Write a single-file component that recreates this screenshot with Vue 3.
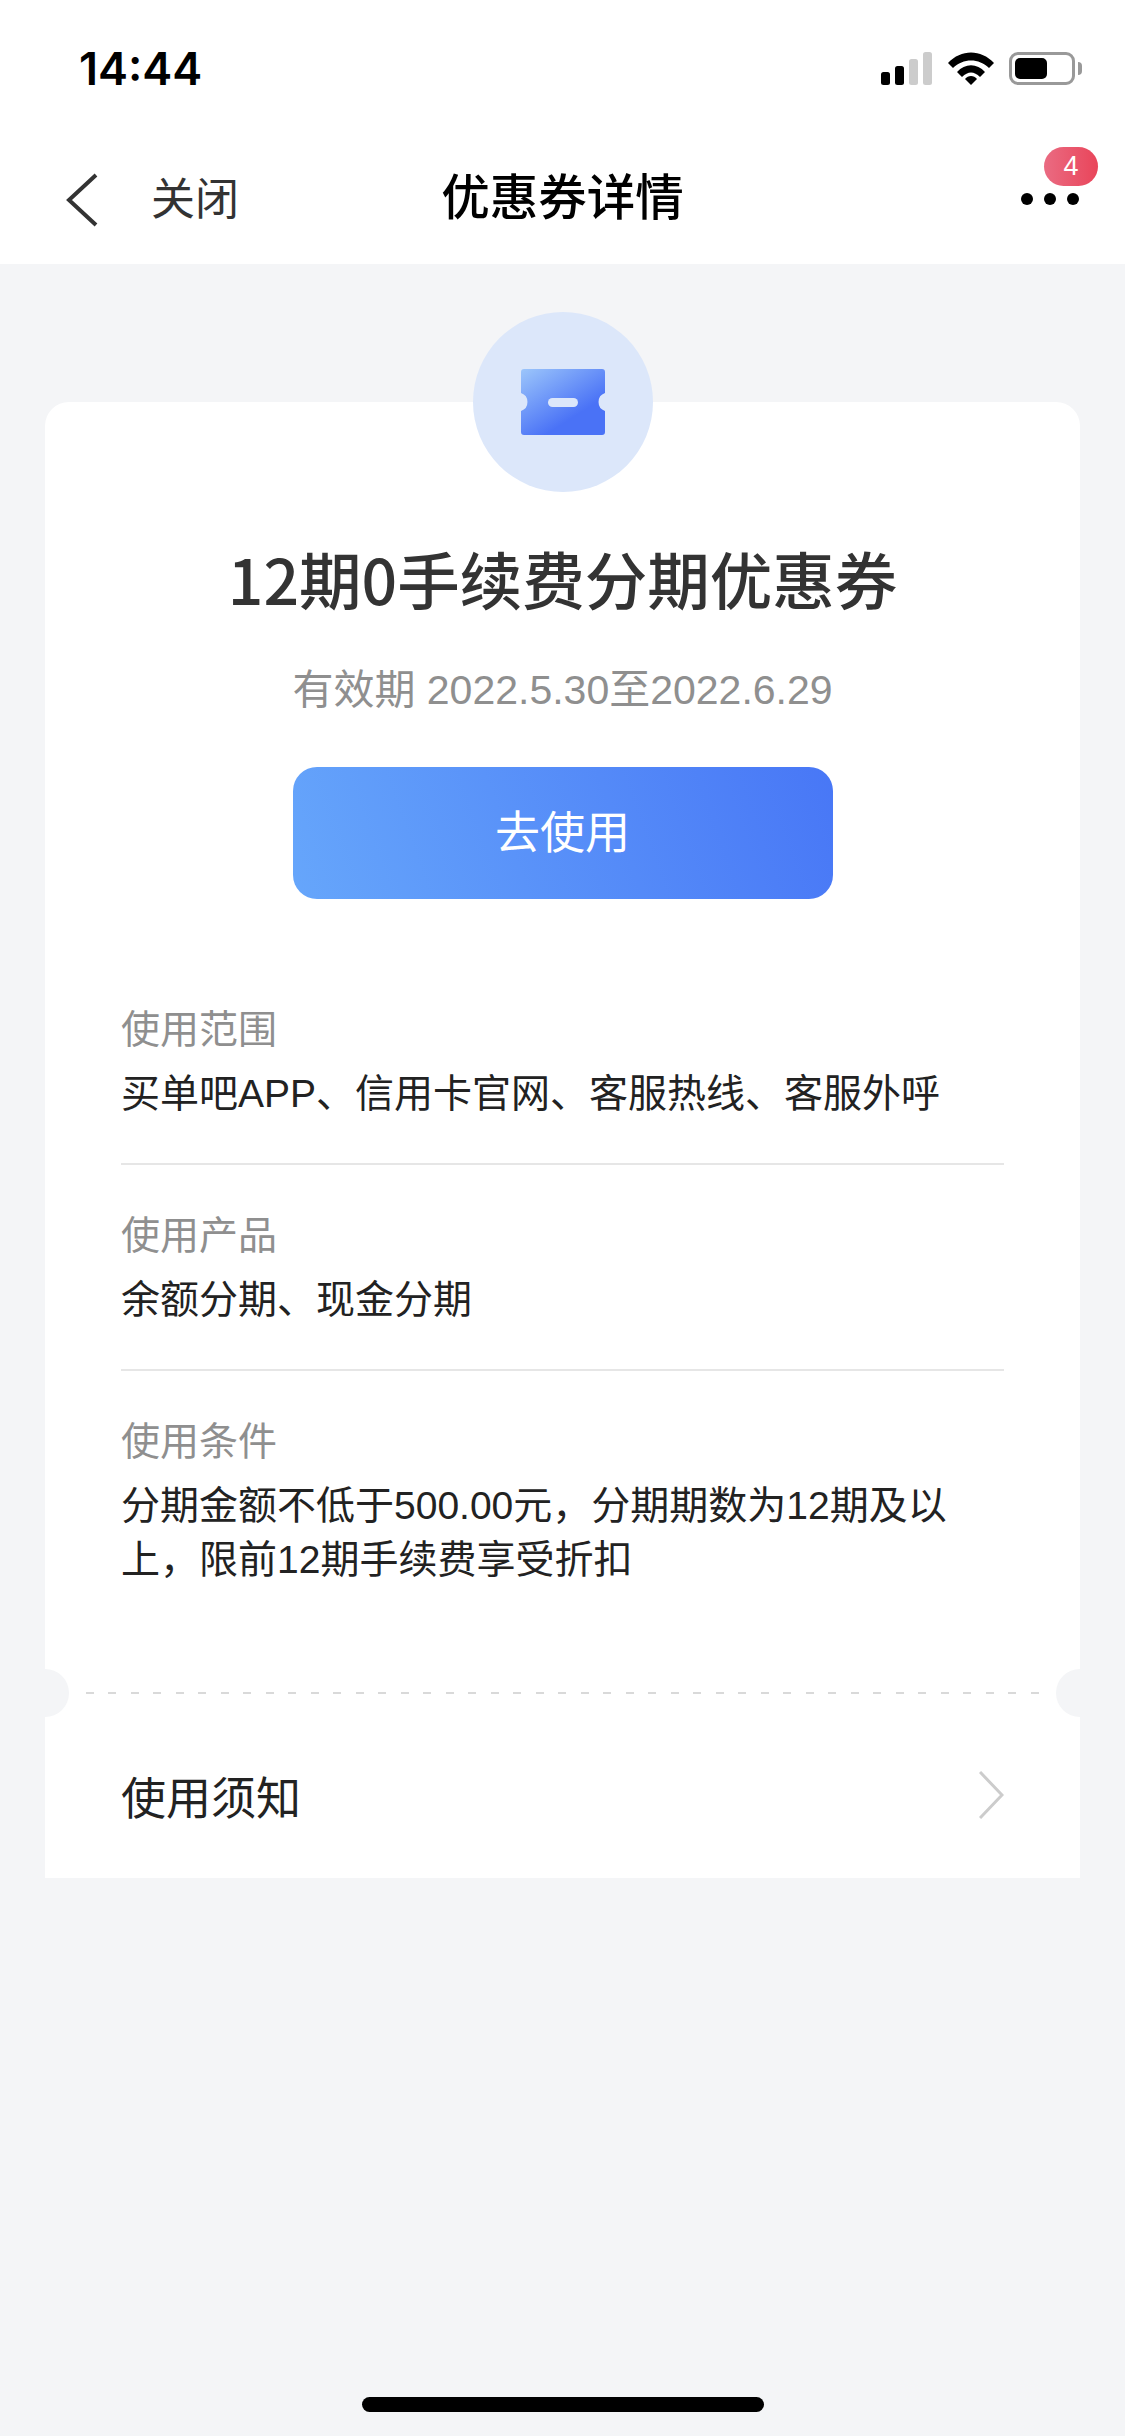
<script setup>
const sections = [
  { label: '使用范围', lines: ['买单吧APP、信用卡官网、客服热线、客服外呼'] },
  { label: '使用产品', lines: ['余额分期、现金分期'] },
  { label: '使用条件', lines: ['分期金额不低于500.00元，分期期数为12期及以', '上，限前12期手续费享受折扣'] },
]
</script>

<template>
  <div class="page">
    <header class="top">
      <div class="status">
        <span class="time">14:44</span>
        <div class="status-icons">
          <svg width="52" height="33" viewBox="0 0 52 33">
            <rect x="0" y="20" width="9" height="13" rx="2.5" fill="#000" />
            <rect x="14" y="14" width="9" height="19" rx="2.5" fill="#000" />
            <rect x="28" y="7" width="9" height="26" rx="2.5" fill="#ccc" />
            <rect x="42" y="0" width="9" height="33" rx="2.5" fill="#ccc" />
          </svg>
          <svg class="wifi" width="46" height="33" viewBox="0 0 46 33">
            <path d="M0 11 C13 -3 33 -3 46 11 L41 16 C31 6 15 6 5 16 Z" fill="#000" />
            <path d="M9 20 C17 11 29 11 37 20 L32 25 C26 19 20 19 14 25 Z" fill="#000" />
            <path d="M17 27 C20 23 26 23 29 27 L23 33 Z" fill="#000" />
          </svg>
          <div class="battery"><div class="battery-fill"></div></div>
          <div class="battery-nub"></div>
        </div>
      </div>
      <nav class="nav">
        <div class="nav-left">
          <svg width="33" height="54" viewBox="0 0 33 54">
            <path d="M30 2 L3 27 L30 52" fill="none" stroke="#333" stroke-width="4" />
          </svg>
          <span class="close">关闭</span>
        </div>
        <h1 class="nav-title">优惠券详情</h1>
        <div class="more">
          <i></i><i></i><i></i>
          <span class="badge">4</span>
        </div>
      </nav>
    </header>

    <main class="main">
      <div class="emblem">
        <svg width="84" height="66" viewBox="0 0 84 66">
          <defs>
            <linearGradient id="tk" x1="0" y1="0" x2="0.8" y2="1">
              <stop offset="0" stop-color="#9cc6fb" />
              <stop offset="0.75" stop-color="#4a72f6" />
            </linearGradient>
          </defs>
          <path d="M3 0 H81 a3 3 0 0 1 3 3 V24 a9.5 9.5 0 0 0 0 18 V63 a3 3 0 0 1 -3 3 H3 a3 3 0 0 1 -3 -3 V42 a9.5 9.5 0 0 0 0 -18 V3 a3 3 0 0 1 3 -3 Z" fill="url(#tk)" />
          <rect x="27" y="29" width="30" height="9" rx="4.5" fill="#dce7fa" />
        </svg>
      </div>
      <section class="card">
        <div class="card-body">
          <h2 class="title">12期0手续费分期优惠券</h2>
          <p class="validity">有效期 2022.5.30至2022.6.29</p>
          <button class="use">去使用</button>
          <div class="sections">
            <div v-for="s in sections" :key="s.label" class="sec">
              <div class="sec-label">{{ s.label }}</div>
              <div class="sec-value">
                <div v-for="l in s.lines" :key="l">{{ l }}</div>
              </div>
            </div>
          </div>
        </div>
        <div class="tear">
          <span class="notch left"></span>
          <span class="dash"></span>
          <span class="notch right"></span>
        </div>
        <div class="notice">
          <span>使用须知</span>
          <svg width="25" height="48" viewBox="0 0 25 48">
            <path d="M1 1 L23 24 L1 47" fill="none" stroke="#ccc" stroke-width="3" />
          </svg>
        </div>
      </section>
    </main>
    <div class="home"></div>
  </div>
</template>

<style scoped>
.page {
  width: 1125px;
  height: 2436px;
  background: #f4f5f7;
  position: relative;
  overflow: hidden;
  font-family: "Noto Sans CJK SC", "Liberation Sans", sans-serif;
  color: #222;
}
.top { background: #fff; height: 264px; }
.status {
  height: 136px;
  padding: 47px 43px 0 79px;
  box-sizing: border-box;
  display: flex;
  justify-content: space-between;
  align-items: flex-start;
}
.time {
  font-family: "Inter", "Liberation Sans", sans-serif;
  font-size: 45px;
  line-height: 44px;
  font-weight: 600;
  color: #000;
}
.status-icons { display: flex; align-items: center; padding-top: 5px; }
.wifi { margin-left: 15px; }
.battery {
  width: 66px;
  height: 33px;
  box-sizing: border-box;
  margin-left: 15px;
  border: 3px solid #999;
  border-radius: 9px;
  padding: 3px;
}
.battery-fill { width: 32px; height: 21px; background: #000; border-radius: 5px; }
.battery-nub {
  width: 4px;
  height: 13px;
  margin-left: 3px;
  background: #999;
  border-radius: 0 4px 4px 0;
}
.nav {
  height: 128px;
  position: relative;
  display: flex;
  align-items: center;
  justify-content: space-between;
  padding: 0 46px 0 66px;
}
.nav-left { display: flex; align-items: center; gap: 52px; }
.close { font-size: 44px; color: #333; line-height: 1; margin-bottom: 9px; }
.nav-title {
  position: absolute;
  left: 0;
  right: 0;
  margin: 0 0 12px;
  text-align: center;
  font-size: 48.5px;
  font-weight: 500;
  color: #000;
}
.more {
  position: relative;
  display: flex;
  gap: 11px;
  margin-top: -2px;
}
.more i { width: 12px; height: 12px; border-radius: 50%; background: #000; }
.badge {
  position: absolute;
  left: 23px;
  top: -46px;
  width: 54px;
  height: 39px;
  border-radius: 20px;
  background: linear-gradient(90deg, #ea6b82, #e9455a);
  color: #fff;
  font-size: 27px;
  line-height: 39px;
  text-align: center;
  font-family: "Liberation Sans", sans-serif;
}
.main {
  padding: 138px 45px 0;
  position: relative;
}
.emblem {
  position: absolute;
  left: 473px;
  top: 48px;
  width: 180px;
  height: 180px;
  border-radius: 50%;
  background: #dce7fa;
  display: flex;
  align-items: center;
  justify-content: center;
  z-index: 1;
}
.card {
  background: #fff;
  border-radius: 24px 24px 0 0;
  height: 1476px;
  display: flex;
  flex-direction: column;
}
.card-body { height: 1267px; flex: none; padding: 0 76px; box-sizing: border-box; }
.title {
  margin: 0;
  padding-top: 133px;
  font-size: 62.5px;
  line-height: 86px;
  font-weight: 500;
  color: #333;
  text-align: center;
  white-space: nowrap;
}
.validity {
  margin: 42px 0 0;
  font-size: 41px;
  line-height: 54px;
  color: #8f8f8f;
  text-align: center;
  white-space: nowrap;
  font-family: "Liberation Sans", "Noto Sans CJK SC", sans-serif;
}
.use {
  display: block;
  width: 540px;
  height: 132px;
  margin: 50px auto 0;
  padding: 0 0 7px;
  border: 0;
  border-radius: 24px;
  background: linear-gradient(70deg, #66a6fb, #4877f6);
  color: #fff;
  font-size: 45px;
  font-family: inherit;
}
.sections { margin-top: 100px; }
.sec { padding-bottom: 42px; border-bottom: 2px solid #e6e6e6; margin-bottom: 40px; }
.sec:last-child { border-bottom: 0; margin-bottom: 0; }
.sec-label { font-size: 39px; line-height: 54px; color: #8f8f8f; }
.sec-value {
  margin-top: 14px;
  font-size: 39px;
  line-height: 54px;
  color: #222;
  white-space: nowrap;
  font-family: "Liberation Sans", "Noto Sans CJK SC", sans-serif;
}
.tear { position: relative; height: 48px; flex: none; display: flex; align-items: center; }
.dash {
  flex: 1;
  margin: 0 40px 0 41px;
  height: 2px;
  background: repeating-linear-gradient(90deg, #d9d9d9 0 8px, transparent 8px 22.5px);
}
.notch {
  position: absolute;
  top: 0;
  width: 48px;
  height: 48px;
  border-radius: 50%;
  background: #f4f5f7;
}
.notch.left { left: -24px; }
.notch.right { right: -24px; }
.notice {
  flex: 1;
  padding: 0 76px 5px;
  display: flex;
  justify-content: space-between;
  align-items: center;
  font-size: 45px;
  color: #222;
}
.home {
  position: absolute;
  left: 362px;
  top: 2397px;
  width: 402px;
  height: 15px;
  border-radius: 8px;
  background: #000;
}
</style>
